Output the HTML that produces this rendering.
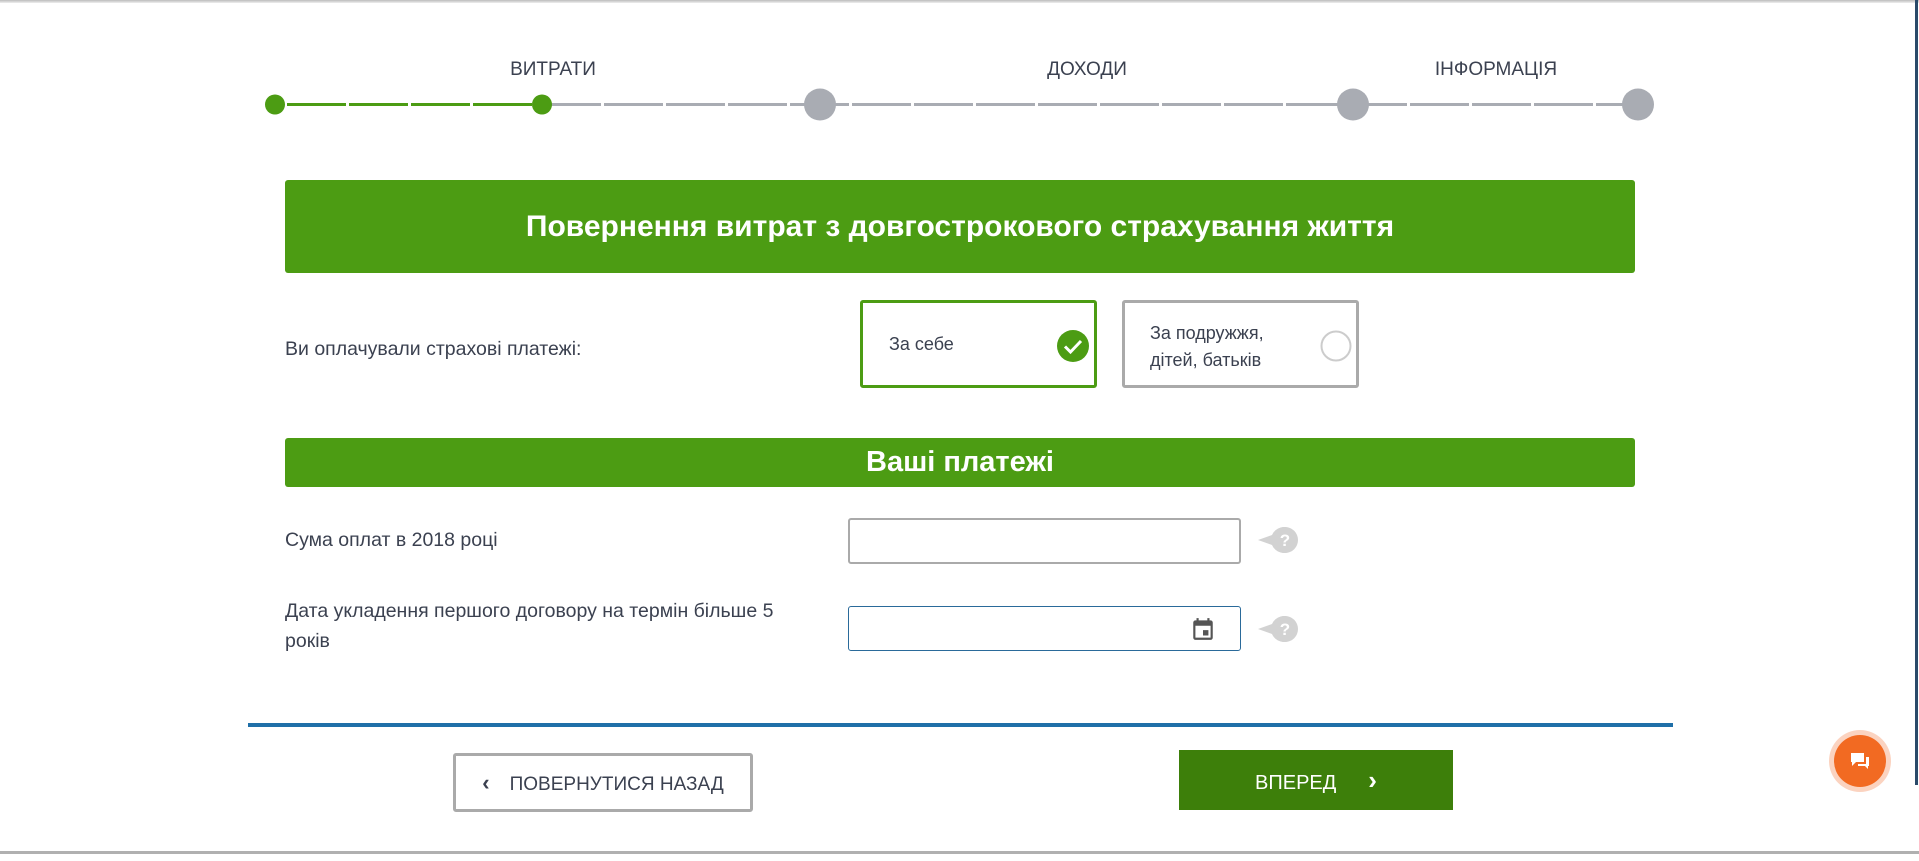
<!DOCTYPE html>
<html><head><meta charset="utf-8"><style>
body{margin:0;width:1919px;height:861px;background:#fff;position:relative;overflow:hidden;font-family:"Liberation Sans",sans-serif;color:#3b4150}
.a{position:absolute}
.top{left:0;top:0;width:1919px;height:3px;background:linear-gradient(#bbb,#eee)}
.lbl{font-size:19px;text-transform:uppercase;transform:translateX(-50%);top:59px;color:#3b4150}
.dot{border-radius:50%}
.hdr{background:#4c9c13;color:#fff;font-weight:bold;text-align:center;border-radius:3px}
.t{font-size:19.5px}
.box{border:3px solid #aaa;border-radius:3px;box-sizing:border-box;background:#fff}
.inp{border:2px solid #aaa;border-radius:3px;box-sizing:border-box}
</style></head><body>
<div class="a top"></div>
<div class="a" style="right:1px;top:0;width:3px;height:785px;background:#2a4a6a"></div>
<div class="a lbl" style="left:553px">Витрати</div>
<div class="a lbl" style="left:1087px">Доходи</div>
<div class="a lbl" style="left:1496px">Інформація</div>
<svg class="a" style="left:0;top:0" width="1919" height="140">
<g stroke-width="3">
<line x1="275" y1="104.5" x2="542" y2="104.5" stroke="#4c9c13" stroke-dasharray="59 3" stroke-dashoffset="-12"/>
<line x1="542" y1="104.5" x2="1638" y2="104.5" stroke="#a9acb3" stroke-dasharray="59 3"/>
</g>
<circle cx="275" cy="104.5" r="10" fill="#4c9c13"/>
<circle cx="542" cy="104.5" r="10" fill="#4c9c13"/>
<circle cx="820" cy="104.5" r="16" fill="#a9acb3"/>
<circle cx="1353" cy="104.5" r="16" fill="#a9acb3"/>
<circle cx="1638" cy="104.5" r="16" fill="#a9acb3"/>
</svg>
<div class="a hdr" style="left:285px;top:180px;width:1350px;height:93px;line-height:93px;font-size:30px">Повернення витрат з довгострокового страхування життя</div>
<div class="a t" style="left:285px;top:338px">Ви оплачували страхові платежі:</div>
<div class="a box" style="left:860px;top:300px;width:237px;height:88px;border-color:#4c9c13">
<div class="a" style="left:26px;top:31px;font-size:18px">За себе</div>
<svg class="a" style="left:194px;top:27px" width="32" height="32"><circle cx="16" cy="16" r="16" fill="#4c9c13"/><path d="M8 16.5l5.5 5.5L24 11" stroke="#fff" stroke-width="3" fill="none"/></svg>
</div>
<div class="a box" style="left:1122px;top:300px;width:237px;height:88px">
<div class="a" style="left:25px;top:17px;font-size:18px;line-height:27px">За подружжя,<br>дітей, батьків</div>
<svg class="a" style="left:195px;top:27px" width="32" height="32"><circle cx="16" cy="16" r="14.5" fill="none" stroke="#ccc" stroke-width="2"/></svg>
</div>
<div class="a hdr" style="left:285px;top:438px;width:1350px;height:49px;line-height:49px;font-size:29px">Ваші платежі</div>
<div class="a t" style="left:285px;top:529px">Сума оплат в 2018 році</div>
<div class="a inp" style="left:848px;top:518px;width:393px;height:46px"></div>
<div class="a t" style="left:285px;top:596px;line-height:30px">Дата укладення першого договору на термін більше 5<br>років</div>
<div class="a inp" style="left:848px;top:606px;width:393px;height:45px;border:1px solid #2a6a9a"></div>
<svg class="a" style="left:1190px;top:616px" width="26" height="26" viewBox="0 0 24 24"><path fill="#555" d="M19 4h-1V2h-2v2H8V2H6v2H5a2 2 0 00-2 2v14a2 2 0 002 2h14a2 2 0 002-2V6a2 2 0 00-2-2zm0 16H5V9h14v11zM12 13h5v5h-5z"/></svg>
<svg class="a" style="left:1256px;top:525px" width="44" height="30"><path d="M2 15l14-5a13 13 0 11 0 10z" fill="#d2d2d2"/><circle cx="29" cy="15" r="13" fill="#d2d2d2"/><text x="29" y="21" font-size="17" font-weight="bold" fill="#fff" text-anchor="middle" font-family="Liberation Sans">?</text></svg>
<svg class="a" style="left:1256px;top:614px" width="44" height="30"><path d="M2 15l14-5a13 13 0 11 0 10z" fill="#d2d2d2"/><circle cx="29" cy="15" r="13" fill="#d2d2d2"/><text x="29" y="21" font-size="17" font-weight="bold" fill="#fff" text-anchor="middle" font-family="Liberation Sans">?</text></svg>
<div class="a" style="left:248px;top:723px;width:1425px;height:4px;background:#1f6fa8"></div>
<div class="a box" style="left:453px;top:753px;width:300px;height:59px;line-height:53px;font-size:19px;text-align:center">
<span style="font-size:22px;margin-right:20px;font-weight:bold">‹</span>ПОВЕРНУТИСЯ НАЗАД</div>
<div class="a" style="left:1179px;top:750px;width:274px;height:60px;line-height:60px;background:#3d7f0a;color:#fff;font-size:20px;text-align:center">ВПЕРЕД<span style="margin-left:32px;font-size:26px;font-weight:bold">›</span></div>
<div class="a dot" style="left:1829px;top:730px;width:62px;height:62px;background:#fbd3c0"></div>
<div class="a dot" style="left:1834px;top:735px;width:52px;height:52px;background:#f26a22"></div>
<svg class="a" style="left:1848px;top:749px" width="24" height="24"><path d="M3 4h13v9H8l-4 4v-4H3z" fill="#fff"/><path d="M18 8h3v9h-1v3l-3-3h-7v-2h8z" fill="#fff"/></svg>
<div class="a" style="left:0;top:851px;width:1919px;height:3px;background:#b0b0b0"></div>
</body></html>
